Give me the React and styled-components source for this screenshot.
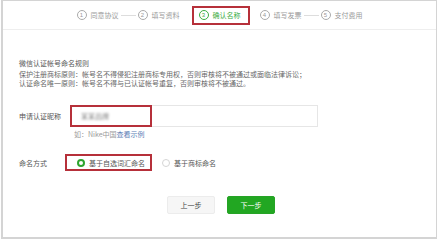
import React from "react";
import styled, { createGlobalStyle } from "styled-components";

const Global = createGlobalStyle`
  html, body {
    margin: 0;
    padding: 0;
    background: #ffffff;
  }
  body {
    font-family: "Noto Sans CJK SC", "Noto Sans", sans-serif;
  }
`;

const Frame = styled.div`
  width: 433px;
  height: 236px;
  margin-left: 1px;
  border: 1px solid #d4d4d4;
  border-left-width: 2px;
  border-bottom-width: 2px;
  background: #fff;
  overflow: hidden;
`;

const Header = styled.div`
  height: 28px;
  border-bottom: 1px solid #eeeeee;
  display: flex;
  align-items: center;
  justify-content: center;
`;

const Step = styled.div`
  display: flex;
  align-items: center;
  gap: 4px;
  height: 15px;
  padding: ${(p) => (p.$active ? "0 7px 0 5px" : "0")};
  margin: ${(p) => p.$margin || "0"};
  border: ${(p) => (p.$active ? "2px solid #b6303a" : "none")};
  color: ${(p) => (p.$active ? "#3bad3f" : "#9a9a9a")};
  font-size: 7px;
  line-height: 10px;
`;

const Num = styled.span`
  width: 8px;
  height: 8px;
  border-radius: 50%;
  border: 1px solid ${(p) => (p.$active ? "#3bad3f" : "#aaaaaa")};
  display: flex;
  align-items: center;
  justify-content: center;
  font-size: 6px;
  line-height: 8px;
  font-family: "Liberation Sans", sans-serif;
`;

const Dash = styled.span`
  width: 15px;
  height: 1px;
  background: #dddddd;
  margin: 0 2px;
`;

const Content = styled.div`
  padding: 28px 0 0 16px;
`;

const Title = styled.div`
  font-size: 7px;
  line-height: 10px;
  color: #555;
`;

const Rules = styled.div`
  margin-top: 2px;
  color: #666;
`;

const RuleLine = styled.div`
  font-size: 7px;
  line-height: 9px;
  height: 9px;
  white-space: nowrap;
`;

const Row = styled.div`
  display: flex;
  align-items: center;
  margin-top: ${(p) => p.$top}px;
`;

const Label = styled.div`
  width: ${(p) => p.$w}px;
  font-size: 7px;
  color: #555;
  line-height: 10px;
`;

const InputBox = styled.div`
  width: 246px;
  height: 20px;
  border: 1px solid #e6e6e6;
  display: flex;
`;

const Marked = styled.div`
  width: 69px;
  height: 18px;
  margin: -1px;
  border: 2px solid #b6303a;
  display: flex;
  align-items: center;
  padding-left: 9px;
`;

const Blurred = styled.span`
  font-size: 7px;
  color: #888;
  filter: blur(1.3px);
`;

const Hint = styled.div`
  margin: 2px 0 0 55px;
  font-size: 7px;
  line-height: 10px;
  color: #999;
  span {
    color: #5d7eb5;
  }
`;

const RadioGroup = styled.div`
  display: flex;
  align-items: center;
  gap: 4px;
  height: 13px;
  padding: ${(p) => (p.$marked ? "0 5px 0 10px" : "0 0 0 10px")};
  border: ${(p) => (p.$marked ? "2px solid #b6303a" : "none")};
  font-size: 7px;
  color: #555;
`;

const Dot = styled.span`
  width: ${(p) => (p.$on ? "4px" : "6px")};
  height: ${(p) => (p.$on ? "4px" : "6px")};
  border-radius: 50%;
  border: ${(p) => (p.$on ? "2px solid #2ea52e" : "1px solid #d5d5d5")};
`;

const Buttons = styled.div`
  display: flex;
  gap: 12px;
  margin: 25px 0 0 148px;
`;

const Button = styled.div`
  width: 46px;
  height: 16px;
  border: 1px solid ${(p) => (p.$primary ? "#26a326" : "#ececec")};
  background: ${(p) => (p.$primary ? "#22a722" : "#f6f6f6")};
  color: ${(p) => (p.$primary ? "#fff" : "#444")};
  border-radius: 2px;
  font-size: 7px;
  display: flex;
  align-items: center;
  justify-content: center;
`;

export default function App() {
  return (
    <>
      <Global />
      <Frame>
        <Header>
          <Step>
            <Num>1</Num>同意协议
          </Step>
          <Dash />
          <Step>
            <Num>2</Num>填写资料
          </Step>
          <Step $active $margin="0 10px 0 12px">
            <Num $active>3</Num>确认名称
          </Step>
          <Step>
            <Num>4</Num>填写发票
          </Step>
          <Dash />
          <Step>
            <Num>5</Num>支付费用
          </Step>
        </Header>
        <Content>
          <Title>微信认证帐号命名规则</Title>
          <Rules>
            <RuleLine>
              保护注册商标原则：帐号名不得侵犯注册商标专用权，否则审核将不被通过或面临法律诉讼；
            </RuleLine>
            <RuleLine>
              认证命名唯一原则：帐号名不得与已认证帐号重复，否则审核将不被通过。
            </RuleLine>
          </Rules>
          <Row $top={17}>
            <Label $w={51}>申请认证昵称</Label>
            <InputBox>
              <Marked>
                <Blurred>某某品牌</Blurred>
              </Marked>
            </InputBox>
          </Row>
          <Hint>
            如：Nike中国<span>查看示例</span>
          </Hint>
          <Row $top={15}>
            <Label $w={46}>命名方式</Label>
            <RadioGroup $marked>
              <Dot $on />
              基于自选词汇命名
            </RadioGroup>
            <RadioGroup>
              <Dot />
              基于商标命名
            </RadioGroup>
          </Row>
          <Buttons>
            <Button>上一步</Button>
            <Button $primary>下一步</Button>
          </Buttons>
        </Content>
      </Frame>
    </>
  );
}
